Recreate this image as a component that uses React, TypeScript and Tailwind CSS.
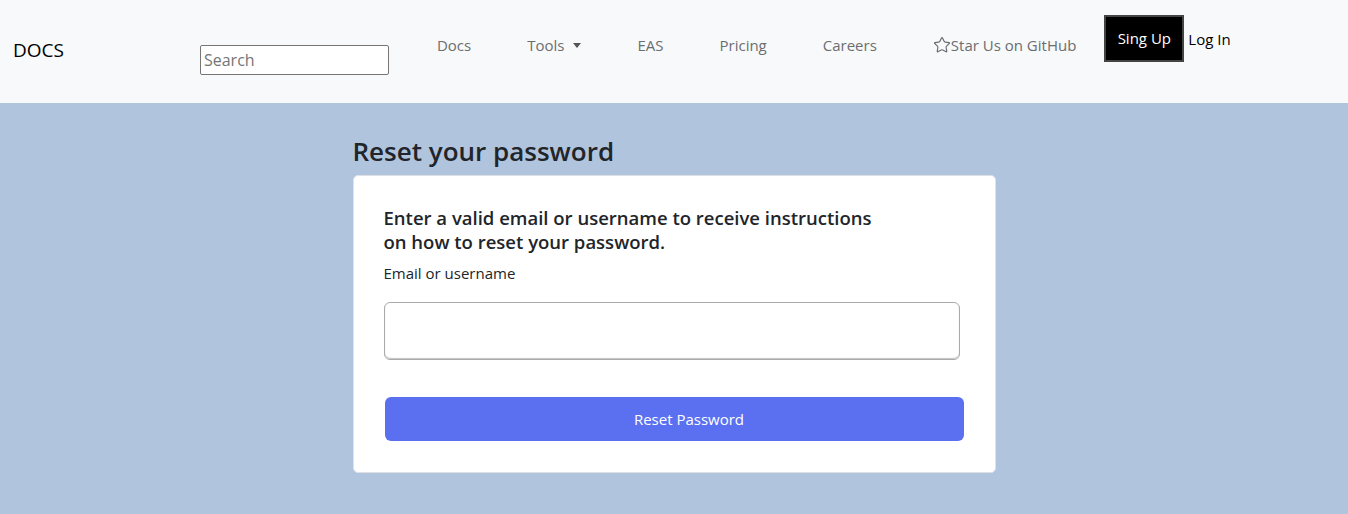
import { Star } from 'lucide-react';

const links = ['Docs', 'Tools', 'EAS', 'Pricing', 'Careers'];

function Navbar() {
  return (
    <nav className="flex h-[103px] items-start bg-[#f8f9fa]">
      <a className="ml-[13px] mt-[38px] text-[19px] leading-[24px] text-black">DOCS</a>
      <input
        placeholder="Search"
        className="ml-[136px] mt-[45px] h-[30px] w-[189px] rounded-[2px] border border-[#767676] bg-white px-[3px] text-[16px] text-black placeholder:text-[#757575]"
      />
      <ul className="ml-[48px] mt-[33px] flex gap-[56px] text-[15px] leading-[24px] text-[#6b6e71]">
        {links.map((l) => (
          <li key={l} className="flex items-center">
            {l}
            {l === 'Tools' && (
              <span className="ml-[9px] mt-[1px] h-0 w-0 border-x-[4px] border-t-[5px] border-x-transparent border-t-[#555]" />
            )}
          </li>
        ))}
        <li className="flex items-center">
          <Star className="h-[18px] w-[18px]" strokeWidth={1.6} />
          Star Us on GitHub
        </li>
      </ul>
      <button className="ml-[28px] mt-[15px] h-[47px] w-[80px] border-2 border-[#444] bg-black text-[15px] text-white">
        Sing Up
      </button>
      <a className="ml-[4px] mt-[27px] text-[15px] leading-[24px] text-black">Log In</a>
    </nav>
  );
}

export default function App() {
  return (
    <div className="flex h-[514px] flex-col font-['Open_Sans',sans-serif]">
      <Navbar />
      <main className="flex-1 bg-[#b0c4de]">
        <div className="mx-auto w-[643px] pt-[28px]">
          <h2 className="mb-[4px] text-[26px] font-semibold leading-[40px] text-[#212529]">Reset your password</h2>
          <div className="rounded-[5px] border border-[#dee2e6] bg-white px-[30px] pb-[31px] pt-[30px]">
            <p className="w-[500px] text-[18.5px] font-semibold leading-[24px] text-[#212529]">
              Enter a valid email or username to receive instructions on how to reset your password.
            </p>
            <label className="mt-[8px] block text-[15px] leading-[22px] text-[#212529]">Email or username</label>
            <input className="mt-[18px] block h-[58px] w-[576px] rounded-[6px] border border-[#aaa] bg-white shadow-[inset_0_-1px_1px_rgba(0,0,0,0.25)]" />
            <button className="ml-[1px] mt-[37px] block h-[44px] w-[579px] rounded-[6px] bg-[#5a70f1] pl-[30px] text-[15px] text-white">
              Reset Password
            </button>
          </div>
        </div>
      </main>
    </div>
  );
}
